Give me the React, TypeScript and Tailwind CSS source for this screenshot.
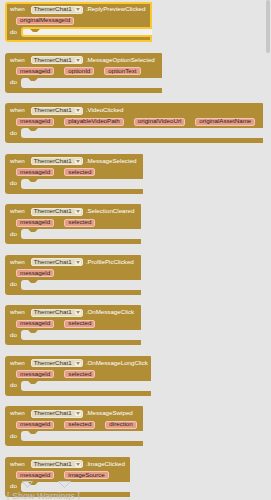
import React from "react";

type Block = {
  name: string;
  params: string[];
  w: string;
  selected?: boolean;
};

const blocks: Block[] = [
  { name: "ReplyPreviewClicked", params: ["originalMessageId"], w: "w-[147px]", selected: true },
  { name: "MessageOptionSelected", params: ["messageId", "optionId", "optionText"], w: "w-[157px]" },
  { name: "VideoClicked", params: ["messageId", "playableVideoPath", "originalVideoUrl", "originalAssetName"], w: "w-[258px]" },
  { name: "MessageSelected", params: ["messageId", "selected"], w: "w-[138px]" },
  { name: "SelectionCleared", params: ["messageId", "selected"], w: "w-[136px]" },
  { name: "ProfilePicClicked", params: ["messageId"], w: "w-[136px]" },
  { name: "OnMessageClick", params: ["messageId", "selected"], w: "w-[136px]" },
  { name: "OnMessageLongClick", params: ["messageId", "selected"], w: "w-[146px]" },
  { name: "MessageSwiped", params: ["messageId", "selected", "direction"], w: "w-[138px]" },
  { name: "ImageClicked", params: ["messageId", "imageSource"], w: "w-[125px]" },
];

function EventBlock({ b }: { b: Block }) {
  const sel = b.selected;
  return (
    <div className={`${b.w} flex flex-col h-[40px] shrink-0`}>
      <div
        className={`bg-[#b18e35] rounded-tl-[3px] rounded-tr-[1px] h-[25px] flex flex-col box-border ${
          sel ? "border-t-2 border-l-2 border-r-2 border-[#fcc82e] pt-[1px]" : "pt-[3px]"
        }`}
      >
        <div className={`h-[9px] flex items-center ${sel ? "pl-[3px]" : "pl-[5px]"}`}>
          <span className="text-white">when</span>
          <span className="ml-[6px] h-[8px] flex items-center bg-[#e2dbc1] border border-[#efe9d6] rounded-[2px] pl-[2px] pr-[1px] text-[#3a3226]">
            <span>ThemerChat1</span>
            <span className="ml-[3px] w-[6px] h-[5px] bg-[#f3efe2] rounded-[1px] flex items-center justify-center">
              <svg width="4" height="3" viewBox="0 0 4 3">
                <path d="M0 0 L4 0 L2 3 Z" fill="#9a8f74" />
              </svg>
            </span>
          </span>
          <span className="ml-[3px] text-white">.{b.name}</span>
        </div>
        <div className={`h-[13px] flex items-center gap-[10px] ${sel ? "pl-[9px]" : "pl-[11px]"}`}>
          {b.params.map((p) => (
            <span
              key={p}
              className="h-[8px] flex items-center px-[3px] bg-[#e79d88] border border-[#f4c6b6] rounded-[2px] text-[#2b1d18]"
            >
              {p}
            </span>
          ))}
        </div>
      </div>
      <div className="flex h-[10px] bg-[#b18e35]">
        <div
          className={`w-[16px] flex items-center text-white box-border ${
            sel ? "border-l-2 border-[#fcc82e] pl-[3px]" : "pl-[5px]"
          }`}
        >
          do
        </div>
        <div
          className={`relative flex-1 rounded-l-[3px] box-border ${
            sel ? "border-t-2 border-l-2 border-b-2 border-[#fcc82e] bg-[#f2f2f2]" : "bg-[#e5e5e5]"
          }`}
        >
          <svg className="absolute left-[7px] top-0" width="10" height="3" viewBox="0 0 10 3">
            <path d="M0 0 L10 0 L7 3 L3 3 Z" fill="#b18e35" />
          </svg>
        </div>
      </div>
      <div
        className={`h-[5px] bg-[#b18e35] rounded-bl-[3px] box-border ${
          sel ? "border-b-2 border-l-2 border-r-2 border-[#fcc82e]" : ""
        }`}
      />
    </div>
  );
}

export default function App() {
  return (
    <div
      className="relative w-[271px] h-[500px] overflow-hidden bg-[#e5e5e5] text-[6.2px] leading-none"
      style={{ fontFamily: '"Liberation Sans", Arial, sans-serif' }}
    >
      <div className="flex flex-col gap-[10.5px] pt-[2px] pl-[5px]">
        {blocks.map((b) => (
          <EventBlock key={b.name} b={b} />
        ))}
      </div>

      <div className="absolute right-[1px] top-0 w-[4px] h-[53px] bg-[#c7c7c7] rounded-[2px]" />

      <svg className="absolute left-[22px] top-[481px]" width="11" height="7" viewBox="0 0 11 7">
        <path d="M0.5 0.5 L10.5 0.5 L5.5 6.5 Z" fill="none" stroke="#c9c9c9" strokeWidth="1" />
      </svg>
      <svg className="absolute left-[58px] top-[481px]" width="13" height="7" viewBox="0 0 13 7">
        <path d="M0.5 0.5 L12.5 0.5 L6.5 6.5 Z" fill="none" stroke="#c9c9c9" strokeWidth="1" />
      </svg>

      <div className="absolute left-[7px] top-[492px] text-[9px] leading-none text-[#c4c4c4] whitespace-nowrap">
        [ Show Warnings ]
      </div>
    </div>
  );
}
